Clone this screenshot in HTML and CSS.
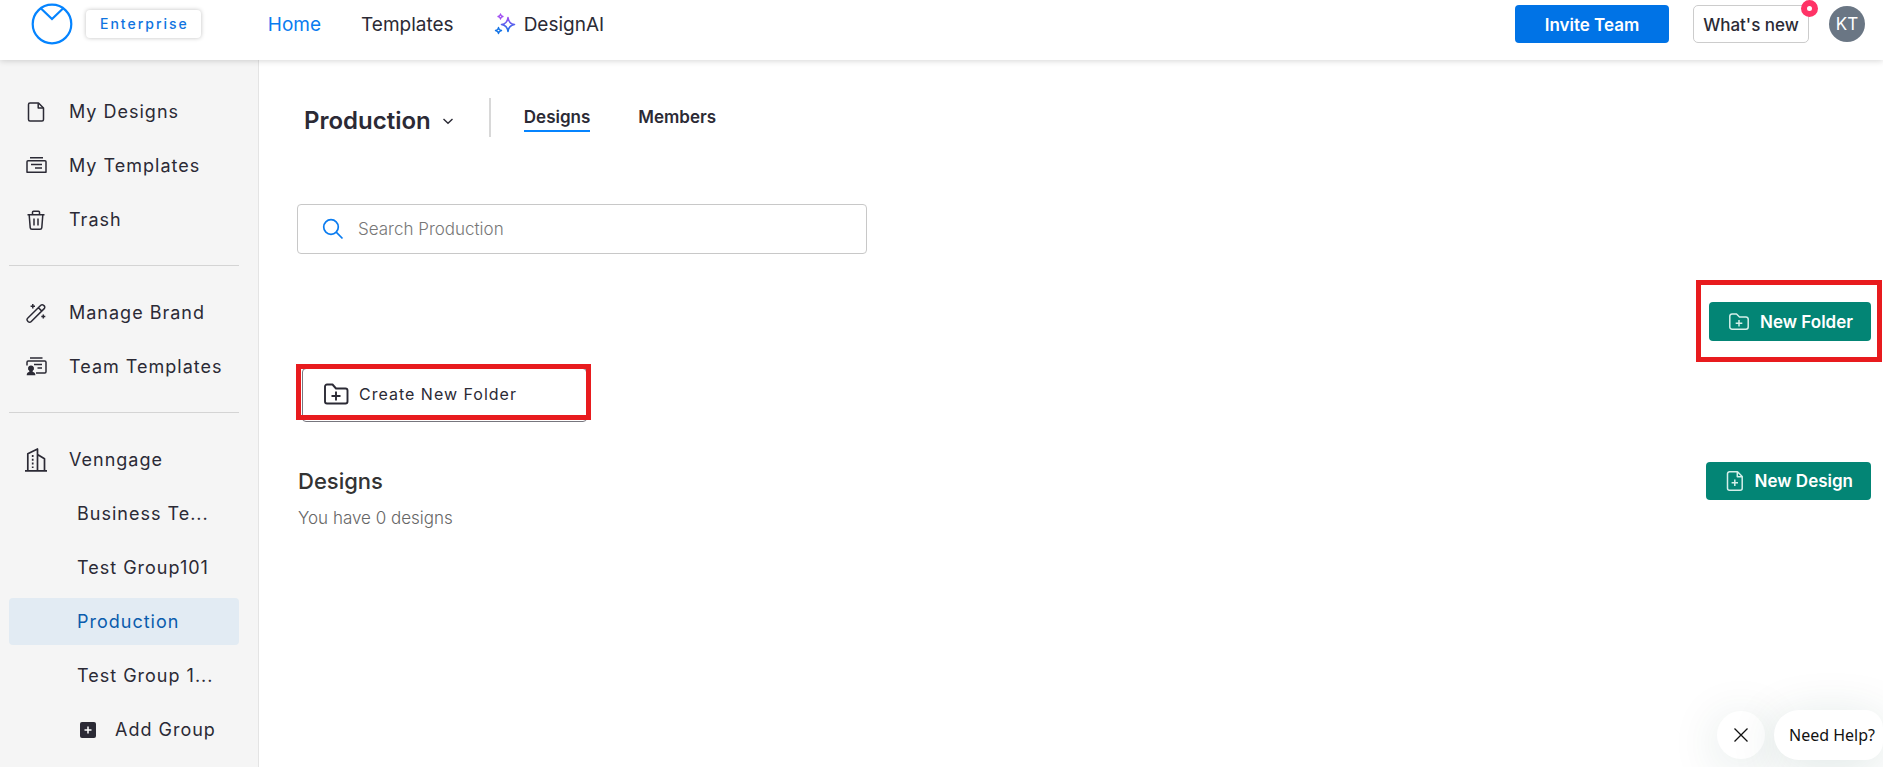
FILE: index.html
```html
<!DOCTYPE html>
<html lang="en">
<head>
<meta charset="utf-8">
<title>Production - Designs</title>
<link rel="stylesheet" href="styles.css">
</head>
<body>
<header class="topbar">
  <a class="logo" href="#" aria-label="Dashboard">
    <svg width="42" height="42" viewBox="0 0 42 42" fill="none" stroke="#0584ff" stroke-width="2.2"><circle cx="21" cy="21" r="19.3"/><path d="M10 5.5 21 16 32 5.5"/></svg>
  </a>
  <span class="plan">Enterprise</span>
  <nav class="topnav">
    <a class="active" href="#">Home</a>
    <a href="#">Templates</a>
    <a class="ai" href="#">
      <svg width="22" height="22" viewBox="0 0 22 22" fill="none" stroke-width="1.6" stroke-linejoin="round"><defs><linearGradient id="spark" x1="0" y1="1" x2="0" y2="0"><stop offset="0" stop-color="#1273e6"/><stop offset="1" stop-color="#a04df2"/></linearGradient></defs><path stroke="url(#spark)" d="M14 4.500Q14.800 10.700 20.500 11.500Q14.800 12.300 14 18.500Q13.200 12.300 7.500 11.500Q13.200 10.700 14 4.500Z"/><path stroke="#a04df2" stroke-width="1.300" d="M6.500 1Q6.800 3.200 9 3.500Q6.800 3.800 6.500 6Q6.200 3.800 4 3.500Q6.200 3.200 6.500 1Z"/><path stroke="#1273e6" stroke-width="1.400" d="M4.500 14.500Q4.900 17.100 7.500 17.500Q4.900 17.900 4.500 20.500Q4.100 17.900 1.500 17.500Q4.100 17.100 4.500 14.500Z"/></svg>
      DesignAI</a>
  </nav>
  <div class="actions">
    <button class="invite" type="button">Invite Team</button>
    <button class="whatsnew" type="button">What's new<span class="dot"></span></button>
    <button class="avatar" type="button">KT</button>
  </div>
</header>
<div class="layout">
  <aside class="sidebar">
    <nav class="group">
      <a class="item" href="#"><svg width="24" height="24" viewBox="0 0 24 24" class="ic"><path d="M6 3h8.500L19.500 8v11.500a1.500 1.500 0 0 1-1.500 1.500H6a1.500 1.500 0 0 1-1.500-1.500v-15A1.500 1.500 0 0 1 6 3Z"/><path d="M14.200 3.200V8h5"/></svg>My Designs</a>
      <a class="item" href="#"><svg width="24" height="24" viewBox="0 0 24 24" class="ic"><path d="M6 3.700h13M4 6.700h17a1 1 0 0 1 1 1v10.600H3V7.700a1 1 0 0 1 1-1ZM7 10.600h11M11 14h7"/></svg>My Templates</a>
      <a class="item" href="#"><svg width="24" height="24" viewBox="0 0 24 24" class="ic"><path d="M3.500 6.700h17M8.500 6.500V4.200a1 1 0 0 1 1-1h5a1 1 0 0 1 1 1v2.300M5.200 7l1 12.600a1.800 1.800 0 0 0 1.800 1.700h8a1.800 1.800 0 0 0 1.800-1.700L18.800 7M10 10.500v7M14 10.500v7"/></svg>Trash</a>
    </nav>
    <hr>
    <nav class="group">
      <a class="item" href="#"><svg width="24" height="24" viewBox="0 0 24 24" class="ic"><path d="m3.600 17.200 13.200-13a1.900 1.900 0 0 1 2.700 0l.7.700a1.900 1.900 0 0 1 0 2.700L7 20.800a1.900 1.900 0 0 1-2.700 0l-.7-.8a1.900 1.900 0 0 1 0-2.800ZM14.500 6.800l3.300 3.300M8.800 3v4.400M6.600 5.200H11M19.300 13.500v4M17.300 15.500h4"/></svg>Manage Brand</a>
      <a class="item" href="#"><svg width="24" height="24" viewBox="0 0 24 24" class="ic"><path d="M6 3h12.500M3 10.500V7.200A1.200 1.200 0 0 1 4.200 6h16.600A1.200 1.200 0 0 1 22 7.200v9.600a1.200 1.200 0 0 1-1.200 1.200H12M10 9.600h8M13.500 13h4.500"/><path fill="#2b2a35" stroke="none" d="M7 10.500a2.900 2.900 0 0 1 1.600 5.400l.2 1c1.700.3 2.600 1.300 2.600 3.300h-8.700c0-2 .9-3 2.500-3.300l.2-1A2.900 2.900 0 0 1 7 10.500Z"/></svg>Team Templates</a>
    </nav>
    <hr>
    <nav class="group">
      <a class="item" href="#"><svg width="24" height="24" viewBox="0 0 24 24" class="ic"><path stroke-width="1.700" d="M1 22.800h22M3.800 22.800V5.700L13.500 1v21.800M13.500 6.500 20.500 10.800v12"/><path stroke-width="1.700" stroke-dasharray="2 1.800" d="M8.700 7v13"/></svg>Venngage</a>
      <a class="item sub" href="#">Business Te...</a>
      <a class="item sub" href="#">Test Group101</a>
      <a class="item sub current" href="#" aria-current="page">Production</a>
      <a class="item sub" href="#">Test Group 1...</a>
      <button class="item sub add" type="button"><svg width="16" height="16" viewBox="0 0 16 16"><rect width="16" height="16" rx="2" fill="#2b2a35"/><path d="M8 4.500v7M4.500 8h7" stroke="#fff" stroke-width="1.500"/></svg>Add Group</button>
    </nav>
  </aside>
  <main class="main">
    <div class="heading">
      <h1><button class="team" type="button">Production<svg width="12" height="12" viewBox="0 0 12 12" fill="none" stroke="#2b2a35" stroke-width="1.400"><path d="m1.500 4 4.500 4.300L10.500 4"/></svg></button></h1>
      <nav class="tabs"><a class="on" href="#">Designs</a><a href="#">Members</a></nav>
    </div>
    <label class="search">
      <svg width="22" height="22" viewBox="0 0 22 22" fill="none" stroke="#0a7cf0" stroke-width="1.700"><circle cx="9" cy="9" r="7.300"/><path d="m14.200 14.200 6.300 6.300"/></svg>
      <input type="search" placeholder="Search Production" aria-label="Search Production">
    </label>
    <div class="row end">
      <div class="marked folder">
        <button class="green" type="button"><svg width="20" height="18" viewBox="1 1 20 18" class="wic"><path d="M4 2h4.500l3 3H18a2.200 2.200 0 0 1 2.200 2.200V15A2.200 2.200 0 0 1 18 17.200H4A2.200 2.200 0 0 1 1.800 15V4.200A2.200 2.200 0 0 1 4 2ZM11 8v6.600M7.700 11.300h6.600"/></svg>New Folder</button>
      </div>
    </div>
    <div class="marked create">
      <button class="card" type="button"><svg width="26" height="24" viewBox="0 0 26 24" class="ic"><path stroke-width="1.900" d="M4 2.500h5.500l3.500 4h9.500A2 2 0 0 1 24.500 8.500v11a2 2 0 0 1-2 2H4a2 2 0 0 1-2-2v-15a2 2 0 0 1 2-2ZM13 9.500v9M8.500 14h9"/></svg>Create New Folder</button>
    </div>
    <section class="row designs">
      <div>
        <h2>Designs</h2>
        <p>You have 0 designs</p>
      </div>
      <button class="green" type="button"><svg width="18" height="22" viewBox="0 0 18 22" class="wic"><path d="M3.500 1.800h8L16.200 6.500v11.700a2 2 0 0 1-2 2H3.500a2 2 0 0 1-2-2V3.800a2 2 0 0 1 2-2ZM11.300 2v4.700H16M8.800 9.500v6.400M5.600 12.700H12"/></svg>New Design</button>
    </section>
  </main>
</div>
<div class="help">
  <button class="close" type="button" aria-label="Close"><svg width="14" height="14" viewBox="0 0 14 14" stroke="#111" stroke-width="1.300"><path d="m.5.5 13 13M13.500.5l-13 13"/></svg></button>
  <button class="ask" type="button">Need Help?</button>
</div>
</body>
</html>
```
FILE: styles.css
```css
* { box-sizing: border-box; }
html, body { height: 100%; }
body {
  margin: 0;
  display: flex;
  flex-direction: column;
  overflow: hidden;
  background: #fff;
  color: #2b2a35;
  font-family: Inter, "Liberation Sans", sans-serif;
  font-size: 17px;
}
button { font: inherit; color: inherit; border: 0; background: none; padding: 0; cursor: pointer; }
a { color: inherit; text-decoration: none; }
svg { flex: none; display: block; }

.topbar {
  position: relative;
  z-index: 1;
  display: flex;
  align-items: center;
  height: 60px;
  padding: 0 18px 12px 31px;
  background: #fff;
  box-shadow: 0 1px 6px rgba(0, 0, 0, .16);
}
.plan {
  margin-left: 13px;
  padding: 0 12px 0 14px;
  border-radius: 4px;
  line-height: 28px;
  font-size: 14px;
  font-weight: 500;
  letter-spacing: 2px;
  color: #0f74e0;
  box-shadow: 0 0 4px rgba(0, 0, 0, .25);
}
.topnav { display: flex; gap: 40px; margin-left: 67px; font-size: 19px; }
.topnav .active { color: #0a7cf0; }
.ai { display: flex; align-items: center; gap: 8px; }
.actions { display: flex; align-items: center; margin-left: auto; }
.invite {
  width: 154px;
  height: 38px;
  padding-top: 2px;
  border-radius: 4px;
  background: #0073e6;
  color: #fff;
  font-weight: 600;
}
.whatsnew {
  position: relative;
  width: 116px;
  height: 38px;
  margin: 0 20px 0 24px;
  padding-top: 2px;
  border: 1px solid #ccc;
  border-radius: 5px;
  font-weight: 500;
}
.dot {
  position: absolute;
  top: -6px;
  right: -10px;
  width: 17px;
  height: 17px;
  border: 6px solid #ff3366;
  border-radius: 50%;
  background: #fff;
}
.avatar { width: 36px; height: 36px; border-radius: 50%; background: #6a7684; color: #fff; }

.layout { display: flex; flex: 1; min-height: 0; }
.sidebar {
  flex: none;
  width: 259px;
  padding: 28px 19px 0 9px;
  border-right: 1px solid #e4e4e4;
  background: #f5f5f5;
}
.sidebar hr { margin: 22px 0 23px; border: 0; border-top: 1px solid #d4d4d4; }
.group { display: flex; flex-direction: column; gap: 7px; }
.item {
  display: flex;
  align-items: center;
  gap: 21px;
  height: 47px;
  padding-left: 15px;
  border-radius: 4px;
  font-size: 18px;
  letter-spacing: 1px;
  white-space: nowrap;
}
.sub { padding-left: 68px; }
.current { background: #e2ebf3; color: #0a5cad; }
.add { gap: 19px; padding-left: 71px; }
.ic { fill: none; stroke: #2b2a35; stroke-width: 1.5; stroke-linejoin: round; }
.wic { fill: none; stroke: #d5efea; stroke-width: 1.5; stroke-linejoin: round; }

.main { flex: 1; min-width: 0; padding: 38px 12px 0 38px; }
.heading { display: flex; height: 39px; }
h1 { margin: 0; padding: 0 35px 0 7px; border-right: 2px solid #d8d8d8; font-size: 24px; font-weight: 600; }
.team { display: flex; align-items: center; gap: 11px; height: 45px; }
.tabs { display: flex; align-items: flex-start; gap: 48px; padding: 7px 0 0 33px; font-weight: 600; line-height: 24px; }
.tabs .on { padding-bottom: 1px; border-bottom: 2px solid #0584ff; }
.search {
  display: flex;
  align-items: center;
  gap: 14px;
  width: 570px;
  height: 50px;
  margin-top: 67px;
  padding: 0 24px;
  border: 1px solid #c8c8c8;
  border-radius: 4px;
}
.search input { flex: 1; min-width: 0; padding: 0; border: 0; outline: 0; background: none; font: 300 17px Inter, sans-serif; color: #2b2a35; }
.search input::placeholder { color: #777; opacity: 1; }
.row { display: flex; justify-content: space-between; align-items: flex-start; }
.end { justify-content: flex-end; margin-top: 48px; }
.green {
  display: flex;
  align-items: center;
  gap: 11px;
  height: 39px;
  padding: 0 18px 0 20px;
  border-radius: 4px;
  background: #038575;
  color: #fff;
  font-weight: 600;
}
.marked { position: relative; }
.marked::after { content: ""; position: absolute; border: 5px solid #e81b1e; pointer-events: none; }
.folder::after { inset: -22px -11px -21px -13px; }
.create { width: 294px; margin-top: 27px; padding: 0 4px 0 5px; }
.create::after { inset: -4px 0 2px -1px; }
.card {
  display: flex;
  align-items: center;
  gap: 10px;
  width: 100%;
  height: 54px;
  padding: 0 0 3px 20px;
  border: 1px solid #77767e;
  border-radius: 4px;
  font-size: 16px;
  letter-spacing: 1px;
}
.designs { margin-top: 40px; }
.designs .green { height: 38px; }
h2 { margin: 5px 0 0 1px; font-size: 22px; line-height: 28px; font-weight: 500; color: #333; }
p { margin: 11px 0 0 1px; line-height: 24px; font-weight: 300; color: #666; }

.help { position: absolute; right: 0; bottom: 0; display: flex; align-items: center; gap: 9px; padding-bottom: 7px; }
.close, .ask { background: #fff; box-shadow: 0 8px 50px rgba(0, 70, 60, .14); }
.close { display: grid; place-items: center; width: 48px; height: 48px; border-radius: 50%; }
.ask { height: 50px; padding: 0 8px 0 15px; border-radius: 25px 18px 18px 25px; font-family: "Noto Sans", sans-serif; font-size: 16px; color: #111; }
```
